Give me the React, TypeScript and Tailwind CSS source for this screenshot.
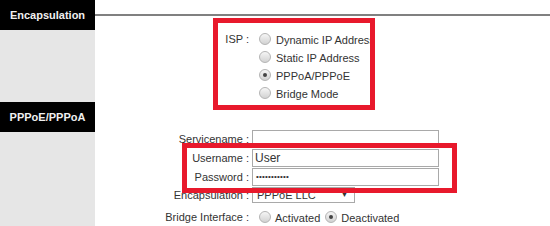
import React from 'react';

const font = { fontFamily: '"Liberation Sans", Arial, sans-serif' };

const Radio = ({ checked = false }: { checked?: boolean }) => (
  <span className="relative inline-block w-[12px] h-[12px] shrink-0 rounded-full border border-[#b4b4b4] bg-gradient-to-b from-[#f6f6f6] to-[#d2d2d2]">
    {checked && (
      <span className="absolute left-[3px] top-[3px] w-[4px] h-[4px] rounded-full bg-[#444]" />
    )}
  </span>
);

const SideHeader = ({ title }: { title: string }) => (
  <div className="w-[95px] shrink-0 flex flex-col bg-[#e6e6e6]">
    <div className="h-[30px] bg-black text-[#f0f0f0] text-[11px] font-bold flex items-center justify-center">
      {title}
    </div>
  </div>
);

const ispOptions = [
  { label: 'Dynamic IP Address', checked: false },
  { label: 'Static IP Address', checked: false },
  { label: 'PPPoA/PPPoE', checked: true },
  { label: 'Bridge Mode', checked: false },
];

export default function App() {
  return (
    <div className="relative w-[550px] h-[226px] overflow-hidden bg-white text-[11px] text-[#333]" style={font}>
      {/* Encapsulation */}
      <div className="flex h-[102px]">
        <SideHeader title="Encapsulation" />
        <div className="flex-1 flex flex-col">
          <div className="mt-[14px] h-[3px] bg-[#808080]" />
          <div className="mt-[14px] grid grid-cols-[157px_1fr]">
            <div className="h-[18px] flex items-center justify-end pr-[3px]">ISP :</div>
            <div className="flex flex-col">
              {ispOptions.map(o => (
                <div key={o.label} className="h-[18px] flex items-center gap-[5px] pl-[7px] whitespace-nowrap">
                  <Radio checked={o.checked} />
                  <span className="mt-[2px]">{o.label}</span>
                </div>
              ))}
            </div>
          </div>
        </div>
      </div>

      {/* PPPoE/PPPoA */}
      <div className="flex h-[124px]">
        <SideHeader title="PPPoE/PPPoA" />
        <div className="flex-1 flex flex-col">
          <div className="mt-[13px] h-[3px] bg-[#808080]" />
          <div className="mt-[15px] grid grid-cols-[157px_1fr] gap-y-[1px]">
            <div className="h-[18px] flex items-center justify-end pr-[3px]">Servicename :</div>
            <div className="h-[18px] w-[187px] border border-[#a9a9a9] bg-white" />
            <div className="h-[18px] flex items-center justify-end pr-[3px]">Username :</div>
            <div className="h-[18px] w-[187px] border border-[#a9a9a9] bg-white px-[2px] flex items-center text-[12px]">User</div>
            <div className="h-[18px] flex items-center justify-end pr-[3px]">Password :</div>
            <div className="h-[18px] w-[187px] border border-[#a9a9a9] bg-white px-[3px] flex items-center text-[8px] tracking-[0.2px]">
              •••••••••••
            </div>
            <div className="h-[16px] flex items-center justify-end pr-[3px]">Encapsulation :</div>
            <div className="h-[16px] w-[103px] border border-[#a9a9a9] bg-white pl-[4px] pr-[6px] flex items-center justify-between">
              <span>PPPoE LLC</span>
              <span className="text-[7px]">▼</span>
            </div>
            <div className="mt-[4px] h-[18px] flex items-center justify-end pr-[3px]">Bridge Interface :</div>
            <div className="mt-[4px] h-[18px] flex items-center gap-[4px] pl-[7px] whitespace-nowrap">
              <Radio />
              <span className="mt-[2px] mr-[1px]">Activated</span>
              <Radio checked />
              <span className="mt-[2px]">Deactivated</span>
            </div>
          </div>
        </div>
      </div>

      {/* highlight boxes */}
      <div className="absolute left-[213px] top-[18px] w-[162px] h-[92px] border-[5px] border-[#e8192c]" />
      <div className="absolute left-[182px] top-[143px] w-[275px] h-[50px] border-[5px] border-[#e8192c]" />
    </div>
  );
}
